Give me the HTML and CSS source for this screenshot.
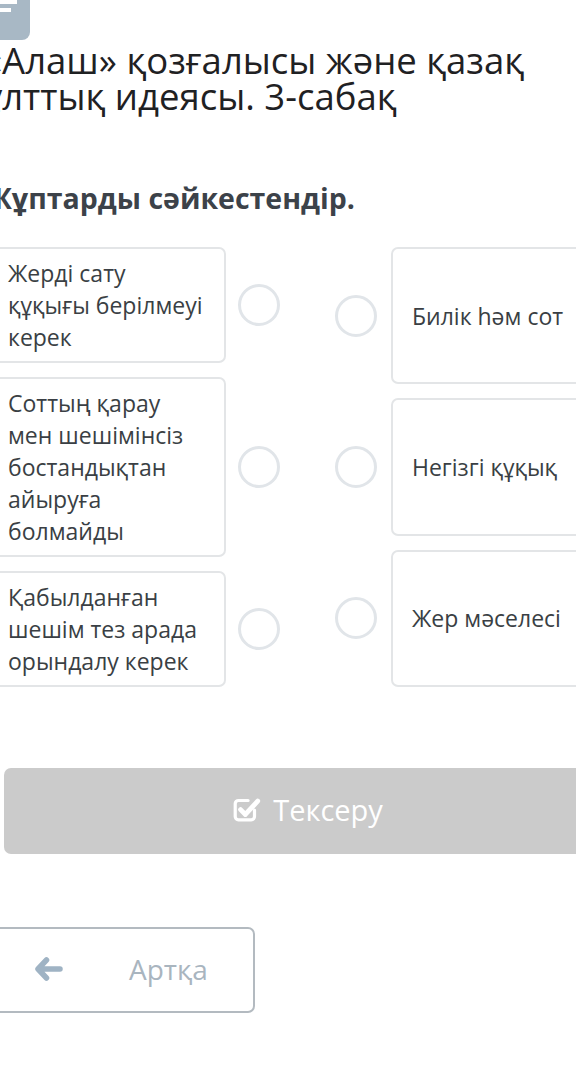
FILE: index.html
```html
<!DOCTYPE html>
<html lang="kk">
<head>
<meta charset="utf-8">
<title>Жұптарды сәйкестендір</title>
<link rel="stylesheet" href="styles.css">
</head>
<body>
<div class="page">
  <div class="topbar"><span class="bar bar1"></span><span class="bar bar2"></span></div>
  <h1 class="title">«Алаш» қозғалысы және қазақ ұлттық идеясы. 3-сабақ</h1>
  <h2 class="task">Жұптарды сәйкестендір.</h2>
  <div class="match">
    <div class="col col-left">
      <div class="item">
        <div class="card">Жерді сату құқығы берілмеуі керек</div>
        <span class="dot"></span>
      </div>
      <div class="item">
        <div class="card">Соттың қарау мен шешімінсіз бостандықтан айыруға болмайды</div>
        <span class="dot"></span>
      </div>
      <div class="item">
        <div class="card">Қабылданған шешім тез арада орындалу керек</div>
        <span class="dot"></span>
      </div>
    </div>
    <div class="col col-right">
      <div class="item">
        <span class="dot"></span>
        <div class="card">Билік һәм сот</div>
      </div>
      <div class="item">
        <span class="dot"></span>
        <div class="card">Негізгі құқық</div>
      </div>
      <div class="item">
        <span class="dot"></span>
        <div class="card">Жер мәселесі</div>
      </div>
    </div>
  </div>
  <button class="check" type="button">
    <svg class="check-ico" width="28" height="30" viewBox="0 0 26 28" aria-hidden="true">
      <path d="M20 16v6a3 3 0 0 1-3 3H5a3 3 0 0 1-3-3V10a3 3 0 0 1 3-3h9" fill="none" stroke="#fff" stroke-width="3" stroke-linecap="round"/>
      <path d="M7 15.5l4.5 4.5L23 7.5" fill="none" stroke="#fff" stroke-width="4.5" stroke-linecap="round" stroke-linejoin="round"/>
    </svg>
    <span>Тексеру</span>
  </button>
  <button class="back" type="button">
    <svg class="back-ico" width="28" height="24" viewBox="0 0 28 24" aria-hidden="true">
      <path d="M11.5 3L3 12l8.5 9M4 12h21" fill="none" stroke="#9fb3c4" stroke-width="5.5" stroke-linecap="round" stroke-linejoin="round"/>
    </svg>
    <span class="back-text">Артқа</span>
  </button>
</div>
</body>
</html>
```
FILE: styles.css
```css
html, body {
  margin: 0;
  padding: 0;
  background: #ffffff;
}
body {
  overflow: hidden;
  font-family: "Open Sans", "Noto Sans", sans-serif;
}
.page {
  width: 644px;
  margin-left: -14px;
}
.topbar {
  width: 44px;
  height: 40px;
  background: #a8b8c5;
  border-bottom-right-radius: 8px;
  position: relative;
}
.bar {
  position: absolute;
  left: 0;
  height: 4px;
  background: #ffffff;
}
.bar1 { top: 0; width: 31px; }
.bar2 { top: 8px; width: 25px; }
.title {
  margin: 2px 0 0 -2px;
  max-width: 570px;
  font-size: 36.5px;
  line-height: 36px;
  font-weight: 400;
  color: #1f2123;
}
.task {
  margin: 67px 0 0 -1px;
  font-size: 28.5px;
  line-height: 34px;
  font-weight: 700;
  color: #3c4249;
}
.match {
  margin-top: 32px;
  display: grid;
  grid-template-columns: 294px 295px;
  column-gap: 55px;
}
.col {
  display: flex;
  flex-direction: column;
  gap: 14px;
}
.item {
  display: flex;
  align-items: center;
}
.col-right .item {
  flex: 1;
  align-items: stretch;
}
.card {
  box-sizing: border-box;
  border: 2px solid #e3e5e7;
  border-radius: 7px;
  font-size: 23px;
  line-height: 32px;
  color: #3a3f44;
}
.col-left .card {
  width: 240px;
  padding: 8px 18px 8px 20px;
}
.col-right .card {
  flex: 1;
  margin-left: 14px;
  padding: 8px 19px;
  display: flex;
  align-items: center;
}
.dot {
  flex: none;
  box-sizing: border-box;
  width: 42px;
  height: 42px;
  border: 3px solid #e1e5e9;
  border-radius: 50%;
}
.col-left .dot {
  margin-left: 12px;
}
.col-right .dot {
  align-self: center;
}
.check {
  display: flex;
  align-items: center;
  justify-content: center;
  gap: 12px;
  box-sizing: border-box;
  margin: 81px 0 0 18px;
  width: 608px;
  height: 86px;
  border: none;
  border-radius: 7px;
  background: #cbcbcb;
  color: #ffffff;
  font-family: "Open Sans", "Noto Sans", sans-serif;
  font-size: 29px;
  padding: 0 0 4px 0;
}
.check-ico {
  margin-top: -2px;
}
.back {
  display: flex;
  align-items: center;
  box-sizing: border-box;
  margin: 73px 0 0 0;
  width: 269px;
  height: 86px;
  border: 2px solid #b3bac0;
  border-radius: 7px;
  background: #ffffff;
  color: #a9b5bf;
  font-family: "Open Sans", "Noto Sans", sans-serif;
  font-size: 28px;
  padding: 0 0 2px 47px;
}
.back-text {
  margin-left: 66px;
}
```
